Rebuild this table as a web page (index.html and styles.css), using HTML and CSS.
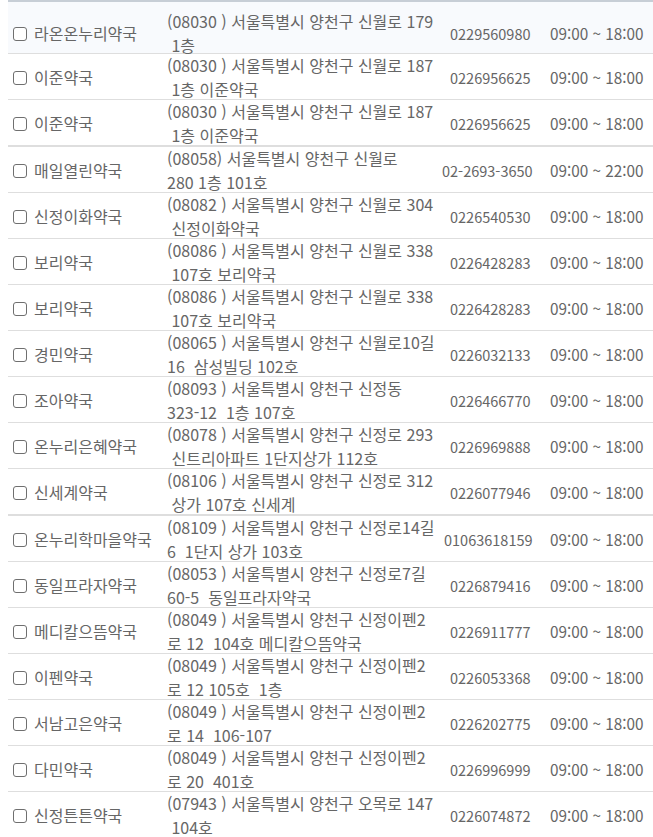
FILE: index.html
```html
<!DOCTYPE html>
<html lang="ko">
<head>
    <meta charset="UTF-8">
    <meta name="viewport" content="width=device-width, initial-scale=1.0">
    <title>약국 목록</title>
    <link rel="stylesheet" href="styles.css">
</head>
<body>
    <div class="pharmacy-list" id="pharmacyList"></div>

    <script>
        const pharmacies = [
            { name: '라온온누리약국', addr: ['(08030 ) 서울특별시 양천구 신월로 179', '\u00a01층'], tel: '0229560980', hours: '09:00 ~ 18:00', first: true },
            { name: '이준약국', addr: ['(08030 ) 서울특별시 양천구 신월로 187', '\u00a01층 이준약국'], tel: '0226956625', hours: '09:00 ~ 18:00' },
            { name: '이준약국', addr: ['(08030 ) 서울특별시 양천구 신월로 187', '\u00a01층 이준약국'], tel: '0226956625', hours: '09:00 ~ 18:00' },
            { name: '매일열린약국', addr: ['(08058) 서울특별시 양천구 신월로', '280 1층 101호'], tel: '02-2693-3650', hours: '09:00 ~ 22:00', group: 'tel-long' },
            { name: '신정이화약국', addr: ['(08082 ) 서울특별시 양천구 신월로 304', '\u00a0신정이화약국'], tel: '0226540530', hours: '09:00 ~ 18:00' },
            { name: '보리약국', addr: ['(08086 ) 서울특별시 양천구 신월로 338', '\u00a0107호 보리약국'], tel: '0226428283', hours: '09:00 ~ 18:00' },
            { name: '보리약국', addr: ['(08086 ) 서울특별시 양천구 신월로 338', '\u00a0107호 보리약국'], tel: '0226428283', hours: '09:00 ~ 18:00' },
            { name: '경민약국', addr: ['(08065 ) 서울특별시 양천구 신월로10길', '16 \u00a0삼성빌딩 102호'], tel: '0226032133', hours: '09:00 ~ 18:00' },
            { name: '조아약국', addr: ['(08093 ) 서울특별시 양천구 신정동', '323-12 \u00a01층 107호'], tel: '0226466770', hours: '09:00 ~ 18:00' },
            { name: '온누리은혜약국', addr: ['(08078 ) 서울특별시 양천구 신정로 293', '\u00a0신트리아파트 1단지상가 112호'], tel: '0226969888', hours: '09:00 ~ 18:00' },
            { name: '신세계약국', addr: ['(08106 ) 서울특별시 양천구 신정로 312', '\u00a0상가 107호 신세계'], tel: '0226077946', hours: '09:00 ~ 18:00' },
            { name: '온누리학마을약국', addr: ['(08109 ) 서울특별시 양천구 신정로14길', '6 \u00a01단지 상가 103호'], tel: '01063618159', hours: '09:00 ~ 18:00', group: 'name-long' },
            { name: '동일프라자약국', addr: ['(08053 ) 서울특별시 양천구 신정로7길', '60-5 \u00a0동일프라자약국'], tel: '0226879416', hours: '09:00 ~ 18:00' },
            { name: '메디칼으뜸약국', addr: ['(08049 ) 서울특별시 양천구 신정이펜2', '로 12 \u00a0104호 메디칼으뜸약국'], tel: '0226911777', hours: '09:00 ~ 18:00' },
            { name: '이펜약국', addr: ['(08049 ) 서울특별시 양천구 신정이펜2', '로 12 105호 \u00a01층'], tel: '0226053368', hours: '09:00 ~ 18:00' },
            { name: '서남고은약국', addr: ['(08049 ) 서울특별시 양천구 신정이펜2', '로 14 \u00a0106-107'], tel: '0226202775', hours: '09:00 ~ 18:00' },
            { name: '다민약국', addr: ['(08049 ) 서울특별시 양천구 신정이펜2', '로 20 \u00a0401호'], tel: '0226996999', hours: '09:00 ~ 18:00' },
            { name: '신정튼튼약국', addr: ['(07943 ) 서울특별시 양천구 오목로 147', '\u00a0104호'], tel: '0226074872', hours: '09:00 ~ 18:00' }
        ];

        const list = document.getElementById('pharmacyList');

        pharmacies.forEach(function(p, i) {
            const row = document.createElement('div');
            row.className = 'row';
            if (p.first) row.classList.add('row-first');
            if (p.group) row.classList.add('row-' + p.group);

            row.innerHTML =
                '<label class="cell name"><input type="checkbox" id="chk' + i + '">' + p.name + '</label>' +
                '<div class="cell addr">' + p.addr[0] + '<br>' + p.addr[1] + '</div>' +
                '<div class="cell tel">' + p.tel + '</div>' +
                '<div class="cell hours">' + p.hours + '</div>';

            list.appendChild(row);
        });
    </script>
</body>
</html>
```

FILE: styles.css
```css
body {
    margin: 0;
    padding: 0 0 0 8px;
    font-family: 'Noto Sans CJK KR', 'Noto Sans', sans-serif;
    font-size: 16px;
    color: #666;
    background: #fff;
    overflow: hidden;
}

.pharmacy-list {
    width: 660px;
}

.row {
    display: grid;
    grid-template-columns: 159px 283px 100px 118px;
    align-items: center;
    height: 45px;
    border-bottom: 1px solid #dedede;
    line-height: 23.5px;
}

.row-first {
    height: 43px;
    padding-top: 8px;
    background: #f8fafd;
    border-top: 2px solid #c7ced6;
}

.row-tel-long,
.row-name-long {
    border-top: 1px solid #dedede;
}

.row-tel-long {
    grid-template-columns: 159px 275px 108px 118px;
}

.row-name-long {
    grid-template-columns: 159px 277px 106px 118px;
}

.cell {
    white-space: nowrap;
}

.name {
    padding-left: 1px;
    display: flex;
    align-items: center;
    cursor: pointer;
}

.name input {
    appearance: none;
    -webkit-appearance: none;
    flex-shrink: 0;
    margin: 0 7px 0 4px;
    width: 14px;
    height: 14px;
    border: 1px solid #6f6f6f;
    border-radius: 3px;
    background: #fff;
    cursor: pointer;
}

.name input:checked {
    background: #0075ff;
    border-color: #0075ff;
}

.tel {
    font-size: 14.5px;
    padding-top: 1px;
}

.hours {
    font-size: 15.3px;
    padding-top: 1px;
}
```
